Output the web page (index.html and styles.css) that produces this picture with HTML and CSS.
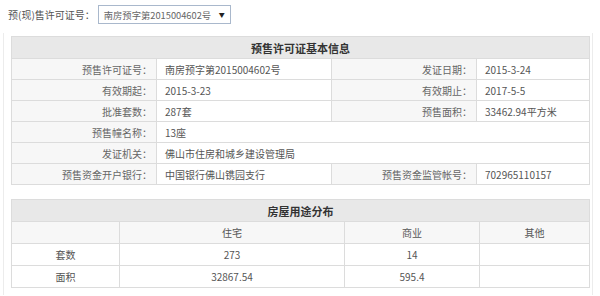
FILE: index.html
```html
<!DOCTYPE html>
<html lang="zh-CN">
<head>
<meta charset="utf-8">
<title>预售许可证</title>
<link rel="stylesheet" href="styles.css">
</head>
<body>
<div class="topbar">
  <span class="top-label">预(现)售许可证号：</span>
  <div class="fake-select"><span>南房预字第2015004602号</span><span class="arrow">▼</span></div>
</div>
<div class="panel">
  <table class="info">
    <colgroup><col class="c1"><col class="c2"><col class="c3"><col class="c4"></colgroup>
    <tr class="head"><th colspan="4">预售许可证基本信息</th></tr>
    <tr><td class="lbl">预售许可证号：</td><td class="val">南房预字第2015004602号</td><td class="lbl">发证日期：</td><td class="val">2015-3-24</td></tr>
    <tr><td class="lbl">有效期起：</td><td class="val">2015-3-23</td><td class="lbl">有效期止：</td><td class="val">2017-5-5</td></tr>
    <tr><td class="lbl">批准套数：</td><td class="val">287套</td><td class="lbl">预售面积：</td><td class="val">33462.94平方米</td></tr>
    <tr><td class="lbl">预售幢名称：</td><td class="val" colspan="3">13座</td></tr>
    <tr><td class="lbl">发证机关：</td><td class="val" colspan="3">佛山市住房和城乡建设管理局</td></tr>
    <tr><td class="lbl">预售资金开户银行：</td><td class="val">中国银行佛山镌园支行</td><td class="lbl">预售资金监管帐号：</td><td class="val">702965110157</td></tr>
  </table>
  <table class="dist">
    <colgroup><col class="d1"><col class="d2"><col class="d3"><col class="d4"></colgroup>
    <tr class="head"><th colspan="4">房屋用途分布</th></tr>
    <tr class="sub"><td></td><td>住宅</td><td>商业</td><td>其他</td></tr>
    <tr><td>套数</td><td>273</td><td>14</td><td></td></tr>
    <tr><td>面积</td><td>32867.54</td><td>595.4</td><td></td></tr>
  </table>
</div>
</body>
</html>
```

FILE: styles.css
```css
html, body {
  margin: 0;
  padding: 0;
  background: #fff;
  font-family: "Noto Sans CJK SC", "Microsoft YaHei", sans-serif;
  font-size: 10px;
  color: #555;
}

.topbar {
  display: flex;
  align-items: center;
  height: 30px;
  padding-left: 8px;
  box-sizing: border-box;
  padding-bottom: 1px;
}

.top-label {
  color: #555;
  white-space: nowrap;
  margin-right: 3px;
}

.fake-select {
  display: flex;
  align-items: center;
  height: 19px;
  width: 133px;
  box-sizing: border-box;
  border: 1px solid #a9b8cc;
  padding: 0 5px 0 5px;
  color: #666;
  font-size: 9.3px;
  justify-content: space-between;
  white-space: nowrap;
}

.fake-select .arrow {
  font-size: 6px;
  color: #222;
  margin-left: 4px;
}

.panel {
  margin: 3px 0 0 3px;
  width: 590px;
  box-sizing: border-box;
  border-left: 1px solid #ececec;
  border-right: 1px solid #ececec;
  padding: 3px 3px 7px 7px;
}

table {
  border-collapse: collapse;
  table-layout: fixed;
  width: 578px;
}

td, th {
  border: 1px solid #dcdcdc;
  padding: 0;
  white-space: nowrap;
  overflow: hidden;
}

.head th {
  background: #e8e8e8;
  height: 21px;
  font-size: 11px;
  font-weight: bold;
  color: #333;
  text-align: center;
}

.info td {
  height: 20px;
}

.info .c1 { width: 145px; }
.info .c2 { width: 175px; }
.info .c3 { width: 145px; }
.info .c4 { width: 113px; }

.lbl {
  background: #f7f7f7;
  text-align: right;
  padding-right: 4px;
  color: #666;
}

.val {
  background: #fff;
  padding-left: 8px;
  color: #555;
}

.dist {
  margin-top: 14px;
}

.dist .d1 { width: 108px; }
.dist .d2 { width: 225px; }
.dist .d3 { width: 135px; }
.dist .d4 { width: 110px; }

.dist td {
  height: 21px;
  text-align: center;
  color: #555;
}

.dist .sub td {
  background: #f7f7f7;
}
```
